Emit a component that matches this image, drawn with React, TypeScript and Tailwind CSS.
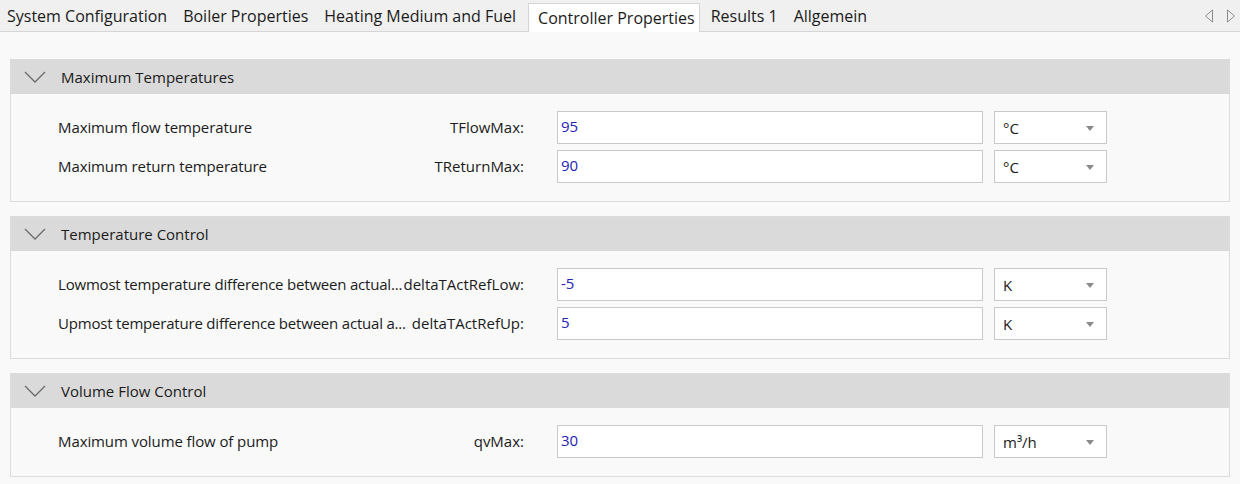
// Controller properties page of a boiler configuration dialog: tab strip on
// top, then collapsible groups of parameter rows (label, symbol, value, unit).

import { useState } from 'react';

type Param = { label: string; symbol: string; value: string; unit: string };
type Group = { title: string; params: Param[] };

const tabs = [
  'System Configuration',
  'Boiler Properties',
  'Heating Medium and Fuel',
  'Controller Properties',
  'Results 1',
  'Allgemein',
];

const groups: Group[] = [
  {
    title: 'Maximum Temperatures',
    params: [
      { label: 'Maximum flow temperature', symbol: 'TFlowMax:', value: '95', unit: '°C' },
      { label: 'Maximum return temperature', symbol: 'TReturnMax:', value: '90', unit: '°C' },
    ],
  },
  {
    title: 'Temperature Control',
    params: [
      {
        label: 'Lowmost temperature difference between actual...',
        symbol: 'deltaTActRefLow:',
        value: '-5',
        unit: 'K',
      },
      {
        label: 'Upmost temperature difference between actual a...',
        symbol: 'deltaTActRefUp:',
        value: '5',
        unit: 'K',
      },
    ],
  },
  {
    title: 'Volume Flow Control',
    params: [
      { label: 'Maximum volume flow of pump', symbol: 'qvMax:', value: '30', unit: 'm³/h' },
    ],
  },
];

function Chevron() {
  return (
    <svg width="22" height="12" viewBox="0 0 22 12" className="text-[#6a6a6a]">
      <path d="M1 1 L11 11 L21 1" fill="none" stroke="currentColor" strokeWidth="1.3" />
    </svg>
  );
}

function ScrollArrow({ dir }: { dir: 'left' | 'right' }) {
  const d = dir === 'left' ? 'M8.5 1 L1.5 7 L8.5 13 Z' : 'M1.5 1 L8.5 7 L1.5 13 Z';
  return (
    <svg width="10" height="14" viewBox="0 0 10 14" className="text-[#8a8a8a]">
      <path d={d} fill="none" stroke="currentColor" strokeWidth="1" />
    </svg>
  );
}

function ParamRow({ p }: { p: Param }) {
  // long descriptions are already shortened with "..." and set a little tighter
  const tight = p.label.endsWith('...');
  return (
    <div className="flex h-[33px] items-center pl-[47px]">
      <div className="flex w-[466px] items-center justify-between whitespace-nowrap">
        <span className={tight ? 'tracking-[-0.2px]' : 'tracking-[-0.1px]'}>{p.label}</span>
        <span className="shrink-0">{p.symbol}</span>
      </div>
      <div className="ml-[33px] flex h-[33px] w-[426px] items-start border border-[#c9c9c9] bg-white pl-[3px] pt-[3px] text-[#2323b4]">
        {p.value}
      </div>
      <div className="ml-[11px] flex h-[33px] w-[113px] items-center justify-between border border-[#c9c9c9] bg-white pl-[8px] pr-[12px] pt-[2px]">
        <span>{p.unit}</span>
        <svg width="8" height="5" viewBox="0 0 8 5">
          <path d="M0 0 H8 L4 5 Z" fill="#8a8a8a" />
        </svg>
      </div>
    </div>
  );
}

function GroupPanel({ g }: { g: Group }) {
  const [open, setOpen] = useState(true);
  return (
    <div className="border border-[#dcdcdc] bg-[#f9f9f9]">
      <button
        type="button"
        onClick={() => setOpen(!open)}
        className="flex h-[34px] w-full items-center bg-[#dadada] pl-[13px] text-left"
      >
        <Chevron />
        <span className="ml-[15px]">{g.title}</span>
      </button>
      {open && (
        <div className="flex flex-col gap-[6px] pb-[18px] pt-[17px]">
          {g.params.map((p) => (
            <ParamRow key={p.symbol} p={p} />
          ))}
        </div>
      )}
    </div>
  );
}

export default function App() {
  const active = 'Controller Properties';
  return (
    <div className="h-[484px] w-[1240px] overflow-hidden bg-[#f9f9f9] font-['Open_Sans',sans-serif] text-[15px] text-[#1b1b1b]">
      <div className="flex h-[32px] items-end border-b border-[#d5d5d5] bg-[#f0f0f0] text-[16px]">
        <div className="-ml-px flex items-end">
          {tabs.map((t) =>
            t === active ? (
              <div
                key={t}
                className="-mb-px ml-[4px] mr-[3px] flex h-[29px] items-center border border-b-0 border-[#d5d5d5] bg-white pb-[1px] pl-[9px] pr-[4px]"
              >
                {t}
              </div>
            ) : (
              <div key={t} className="flex h-[29px] items-center px-[8px] pb-[1px]">
                {t}
              </div>
            ),
          )}
        </div>
        <div className="ml-auto flex h-[29px] items-center gap-[12px] pb-[2px] pr-[4px]">
          <ScrollArrow dir="left" />
          <ScrollArrow dir="right" />
        </div>
      </div>
      <div className="flex flex-col gap-[14px] px-[10px] pt-[27px]">
        {groups.map((g) => (
          <GroupPanel key={g.title} g={g} />
        ))}
      </div>
    </div>
  );
}
